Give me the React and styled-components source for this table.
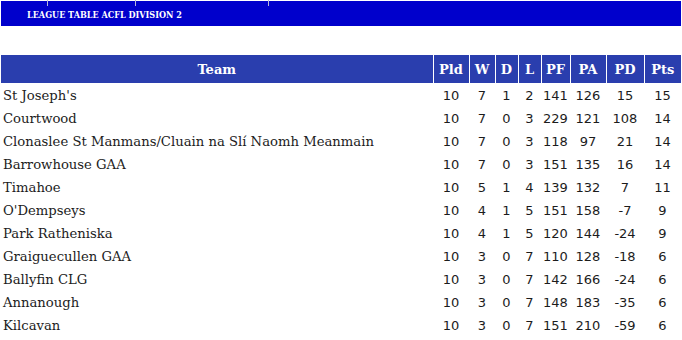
import React from 'react';
import styled, { createGlobalStyle } from 'styled-components';

const GlobalStyle = createGlobalStyle`
  body {
    margin: 0;
    background: #ffffff;
  }
`;

const Page = styled.div`
  padding: 1px;
  width: 680px;
`;

const TitleBar = styled.div`
  position: relative;
  height: 25px;
  background: #0000cc;
  display: flex;
  align-items: center;
  padding-left: 26px;
`;

const Title = styled.span`
  font-family: "DejaVu Serif Condensed", "DejaVu Serif", serif;
  font-weight: 700;
  font-size: 9px;
  color: #ffffff;
  margin-top: 2px;
`;

const Tick = styled.span`
  position: absolute;
  top: -1px;
  left: ${p => p.x}px;
  width: 1px;
  height: 6px;
  background: #b8b8d8;
`;

const Table = styled.table`
  margin-top: 29px;
  width: 680px;
  border-collapse: collapse;
  table-layout: fixed;
`;

const Head = styled.th`
  background: #2a3eae;
  color: #ffffff;
  font-family: "DejaVu Serif", serif;
  font-weight: 700;
  font-size: 13px;
  height: 27px;
  padding: 1px 0 0;
  text-align: center;
  border-left: 1px solid #ffffff;
  &:first-child { border-left: none; }
`;

const Row = styled.tr`
  height: 23px;
`;

const TeamCell = styled.td`
  font-family: "DejaVu Serif", serif;
  font-size: 13.2px;
  color: #1c1c1c;
  padding: 2px 0 0 2px;
  white-space: nowrap;
`;

const NumCell = styled.td`
  font-family: "DejaVu Sans", Verdana, sans-serif;
  font-size: 13px;
  color: #1c1c1c;
  text-align: center;
  padding: 2px 0 0;
`;

const cols = [
  ['Team', 432], ['Pld', 36], ['W', 26], ['D', 23], ['L', 23],
  ['PF', 29], ['PA', 36], ['PD', 38], ['Pts', 37],
];

const rows = [
  ["St Joseph's", 10, 7, 1, 2, 141, 126, 15, 15],
  ['Courtwood', 10, 7, 0, 3, 229, 121, 108, 14],
  ['Clonaslee St Manmans/Cluain na Slí Naomh Meanmain', 10, 7, 0, 3, 118, 97, 21, 14],
  ['Barrowhouse GAA', 10, 7, 0, 3, 151, 135, 16, 14],
  ['Timahoe', 10, 5, 1, 4, 139, 132, 7, 11],
  ["O'Dempseys", 10, 4, 1, 5, 151, 158, -7, 9],
  ['Park Ratheniska', 10, 4, 1, 5, 120, 144, -24, 9],
  ['Graiguecullen GAA', 10, 3, 0, 7, 110, 128, -18, 6],
  ['Ballyfin CLG', 10, 3, 0, 7, 142, 166, -24, 6],
  ['Annanough', 10, 3, 0, 7, 148, 183, -35, 6],
  ['Kilcavan', 10, 3, 0, 7, 151, 210, -59, 6],
];

export default function App() {
  return (
    <Page>
      <GlobalStyle />
      <TitleBar>
        <Tick x={46} />
        <Tick x={134} />
        <Tick x={267} />
        <Title>LEAGUE TABLE ACFL DIVISION 2</Title>
      </TitleBar>
      <Table>
        <colgroup>
          {cols.map(([name, w]) => <col key={name} style={{ width: w }} />)}
        </colgroup>
        <thead>
          <tr>
            {cols.map(([name]) => <Head key={name}>{name}</Head>)}
          </tr>
        </thead>
        <tbody>
          {rows.map(([team, ...nums]) => (
            <Row key={team}>
              <TeamCell>{team}</TeamCell>
              {nums.map((n, i) => <NumCell key={i}>{n}</NumCell>)}
            </Row>
          ))}
        </tbody>
      </Table>
    </Page>
  );
}
